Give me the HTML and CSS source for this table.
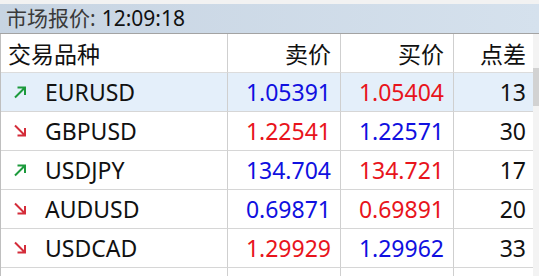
FILE: index.html
```html
<!DOCTYPE html>
<html lang="zh-CN">

<head>
    <meta charset="UTF-8">
    <meta name="viewport" content="width=device-width, initial-scale=1.0">
    <title>市场报价</title>

    <link rel="stylesheet" href="styles.css">
</head>

<body>
    <div class="window">
        <div class="top-strip"></div>
        <div class="title-bar">
            <span class="title-label">市场报价:</span>
            <span class="title-time">12:09:18</span>
        </div>

        <div class="table-area">
            <div class="quotes">
                <!-- header -->
                <div class="row head">
                    <div class="cell sym">交易品种</div>
                    <div class="cell num">卖价</div>
                    <div class="cell num">买价</div>
                    <div class="cell num">点差</div>
                </div>

                <div class="row selected">
                    <div class="cell sym">
                        <svg class="arrow up" viewBox="0 0 14 14"><path d="M2 12.5 L12 2.5 M4.5 2.5 H12 V10" /></svg>
                        EURUSD
                    </div>
                    <div class="cell num blue">1.05391</div>
                    <div class="cell num red">1.05404</div>
                    <div class="cell num">13</div>
                </div>

                <div class="row">
                    <div class="cell sym">
                        <svg class="arrow down" viewBox="0 0 14 14"><path d="M2 1.5 L12 11.5 M4.5 11.5 H12 V4" /></svg>
                        GBPUSD
                    </div>
                    <div class="cell num red">1.22541</div>
                    <div class="cell num blue">1.22571</div>
                    <div class="cell num">30</div>
                </div>

                <div class="row">
                    <div class="cell sym">
                        <svg class="arrow up" viewBox="0 0 14 14"><path d="M2 12.5 L12 2.5 M4.5 2.5 H12 V10" /></svg>
                        USDJPY
                    </div>
                    <div class="cell num blue">134.704</div>
                    <div class="cell num red">134.721</div>
                    <div class="cell num">17</div>
                </div>

                <div class="row">
                    <div class="cell sym">
                        <svg class="arrow down" viewBox="0 0 14 14"><path d="M2 1.5 L12 11.5 M4.5 11.5 H12 V4" /></svg>
                        AUDUSD
                    </div>
                    <div class="cell num blue">0.69871</div>
                    <div class="cell num red">0.69891</div>
                    <div class="cell num">20</div>
                </div>

                <div class="row">
                    <div class="cell sym">
                        <svg class="arrow down" viewBox="0 0 14 14"><path d="M2 1.5 L12 11.5 M4.5 11.5 H12 V4" /></svg>
                        USDCAD
                    </div>
                    <div class="cell num red">1.29929</div>
                    <div class="cell num blue">1.29962</div>
                    <div class="cell num">33</div>
                </div>

                <div class="row">
                    <div class="cell sym"></div>
                    <div class="cell num"></div>
                    <div class="cell num"></div>
                    <div class="cell num"></div>
                </div>
            </div>

            <div class="scroll-track">
                <div class="scroll-thumb"></div>
            </div>
        </div>
    </div>
</body>

</html>
```

FILE: styles.css
```css
* {
    box-sizing: border-box;
}

body {
    margin: 0;
    background-color: white;
    font-family: "Noto Sans", "Noto Sans CJK SC", sans-serif;
    color: #111;
    overflow: hidden;
}

.window {
    width: 539px;
    height: 276px;
    overflow: hidden;
}

.top-strip {
    height: 4px;
    background-color: #f2f2f2;
}

.title-bar {
    height: 30px;
    display: flex;
    align-items: center;
    padding-left: 6px;
    font-size: 21px;
    background: linear-gradient(to right, #c7d4e2, #d5e1ed);
    border-bottom: 1px solid #a3a3a3;
    line-height: 1;
}

.title-label {
    color: #3a3a3a;
}

.title-time {
    color: #111;
    margin-left: 6px;
}

.table-area {
    display: flex;
}

.quotes {
    border-left: 1px solid #bfbfbf;
}

.row {
    display: grid;
    grid-template-columns: 227px 113px 113px 79px;
    height: 39px;
}

.row.selected {
    background-color: #e4effa;
}

.cell {
    display: flex;
    align-items: center;
    font-size: 23px;
    border-right: 1px solid #cfcfcf;
    border-bottom: 1px solid #d6d6d6;
    white-space: nowrap;
}

.row.head .cell {
    font-size: 23px;
    border-bottom-color: #dcdcdc;
}

.cell.sym {
    padding-left: 12px;
}

.row.head .cell.sym {
    padding-left: 7px;
}

.cell.num {
    justify-content: flex-end;
    padding-right: 9px;
}

.row .cell:last-child {
    border-right: none;
    padding-right: 7px;
}

.blue {
    color: #1010e0;
}

.red {
    color: #e8141c;
}

.arrow {
    width: 14px;
    height: 14px;
    margin-right: 18px;
    fill: none;
    stroke-width: 2;
}

.arrow.up {
    stroke: #1c9a3c;
}

.arrow.down {
    stroke: #d42d3a;
}

.scroll-track {
    width: 7px;
    background-color: #f3f3f3;
    padding-top: 34px;
}

.scroll-thumb {
    height: 38px;
    background-color: #d2d2d2;
}
```
